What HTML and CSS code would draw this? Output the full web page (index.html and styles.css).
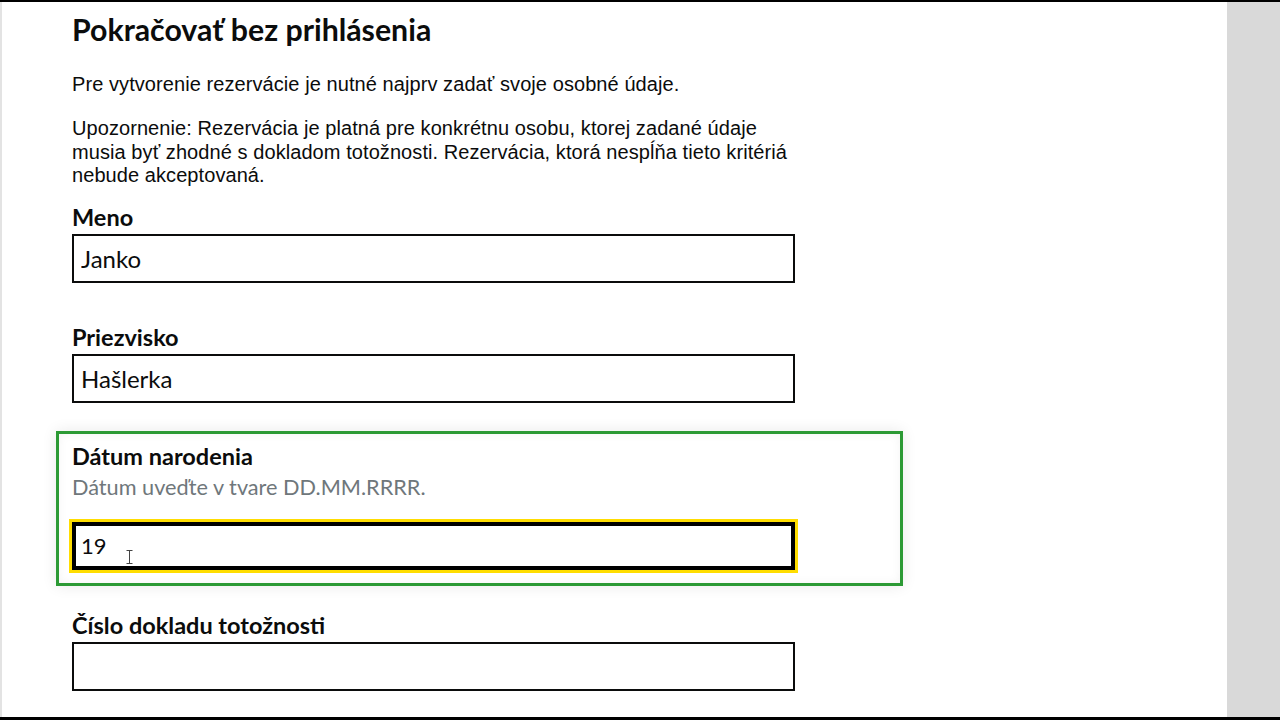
FILE: index.html
```html
<!DOCTYPE html>
<html lang="sk">
  <head>
    <meta charset="UTF-8" />
    <meta name="viewport" content="width=device-width, initial-scale=1.0" />
    <title>Pokračovať bez prihlásenia</title>
    <link rel="stylesheet" href="styles.css">
  </head>
  <body>
    <div class="screen">
      <main class="page">
        <h1 class="page-title">Pokračovať bez prihlásenia</h1>
        <p class="page-text">
          Pre vytvorenie rezervácie je nutné najprv zadať svoje osobné údaje.
        </p>
        <p class="page-text">
          Upozornenie: Rezervácia je platná pre konkrétnu osobu, ktorej zadané
          údaje musia byť zhodné s dokladom totožnosti. Rezervácia, ktorá
          nespĺňa tieto kritériá nebude akceptovaná.
        </p>

        <form class="person-form">
          <div class="form-group">
            <label class="form-label" for="first-name">Meno</label>
            <input class="form-input" id="first-name" type="text" value="Janko" />
          </div>

          <div class="form-group">
            <label class="form-label" for="last-name">Priezvisko</label>
            <input class="form-input" id="last-name" type="text" value="Hašlerka" />
          </div>

          <div class="form-group is-active">
            <label class="form-label" for="birth-date">Dátum narodenia</label>
            <span class="form-hint">Dátum uveďte v tvare DD.MM.RRRR.</span>
            <div class="input-wrap">
              <input class="form-input is-focused" id="birth-date" type="text" value="19" />
              <!-- mouse pointer over the field -->
              <svg class="text-cursor" width="7" height="14" viewBox="0 0 7 14">
                <path d="M0.5 0.5h6M3.5 0.5v13M0.5 13.5h6" stroke="#444" stroke-width="1" fill="none" />
              </svg>
            </div>
          </div>

          <div class="form-group">
            <label class="form-label" for="id-number">Číslo dokladu totožnosti</label>
            <input class="form-input" id="id-number" type="text" />
          </div>
        </form>
      </main>
      <aside class="scrollbar"></aside>
    </div>
  </body>
</html>
```

FILE: styles.css
```css
:root {
  --text: #0b0c0c;
  --hint: #6f777b;
  --green: #2c9a35;
  --focus: #ffdd00;
  --side: #d9d9d9;
}

*,
*::before,
*::after {
  box-sizing: border-box;
  margin: 0;
  padding: 0;
}

body {
  background: #fff;
  color: var(--text);
  font-family: "Liberation Sans", Arial, sans-serif;
  overflow: hidden;
}

.screen {
  display: flex;
  height: 720px;
  border-top: 2px solid #000;
  border-bottom: 3px solid #000;
}

.page {
  width: 1227px;
  border-left: 2px solid #e3e3e3;
  padding: 9px 0 0 70px;
}

.scrollbar {
  flex: 1;
  background: var(--side);
}

.page-title {
  font-family: "Lato", sans-serif;
  font-size: 30.3px;
  font-weight: 700;
  line-height: 36px;
  margin-bottom: 26px;
}

.page-text {
  width: 735px;
  font-size: 20px;
  line-height: 23.5px;
  letter-spacing: 0.075px;
  margin-bottom: 20.5px;
}

.person-form {
  display: flex;
  flex-direction: column;
  margin-top: -5.5px;
}

.form-group {
  display: flex;
  flex-direction: column;
  width: 723px;
  margin-bottom: 40px;
}

.form-label {
  font-family: "Lato", sans-serif;
  font-size: 23.5px;
  font-weight: 700;
  line-height: 28px;
  margin-bottom: 3px;
}

.form-input {
  width: 723px;
  height: 49px;
  border: 2px solid var(--text);
  padding: 0 7px;
  font-family: "Lato", sans-serif;
  font-size: 24px;
  color: var(--text);
  background: #fff;
  outline: none;
}

/* field group with a validation frame */
.form-group.is-active {
  width: 847px;
  margin: -12px 0 25px -16px;
  padding: 8px 13px 13px 13px;
  border: 3px solid var(--green);
  box-shadow: 0 0 14px rgba(0, 0, 0, 0.09), inset 0 0 10px rgba(0, 0, 0, 0.05);
}

.form-group.is-active .form-label {
  margin-bottom: 4px;
}

.form-hint {
  font-family: "Lato", sans-serif;
  font-size: 21.7px;
  line-height: 26px;
  color: var(--hint);
  margin-bottom: 22px;
}

.input-wrap {
  position: relative;
  width: 723px;
}

.form-input.is-focused {
  height: 48px;
  border: 4px solid #000;
  outline: 3px solid var(--focus);
  outline-offset: 0;
  padding: 0 5px;
  font-size: 22px;
}

.text-cursor {
  position: absolute;
  left: 54px;
  top: 28px;
}
```
